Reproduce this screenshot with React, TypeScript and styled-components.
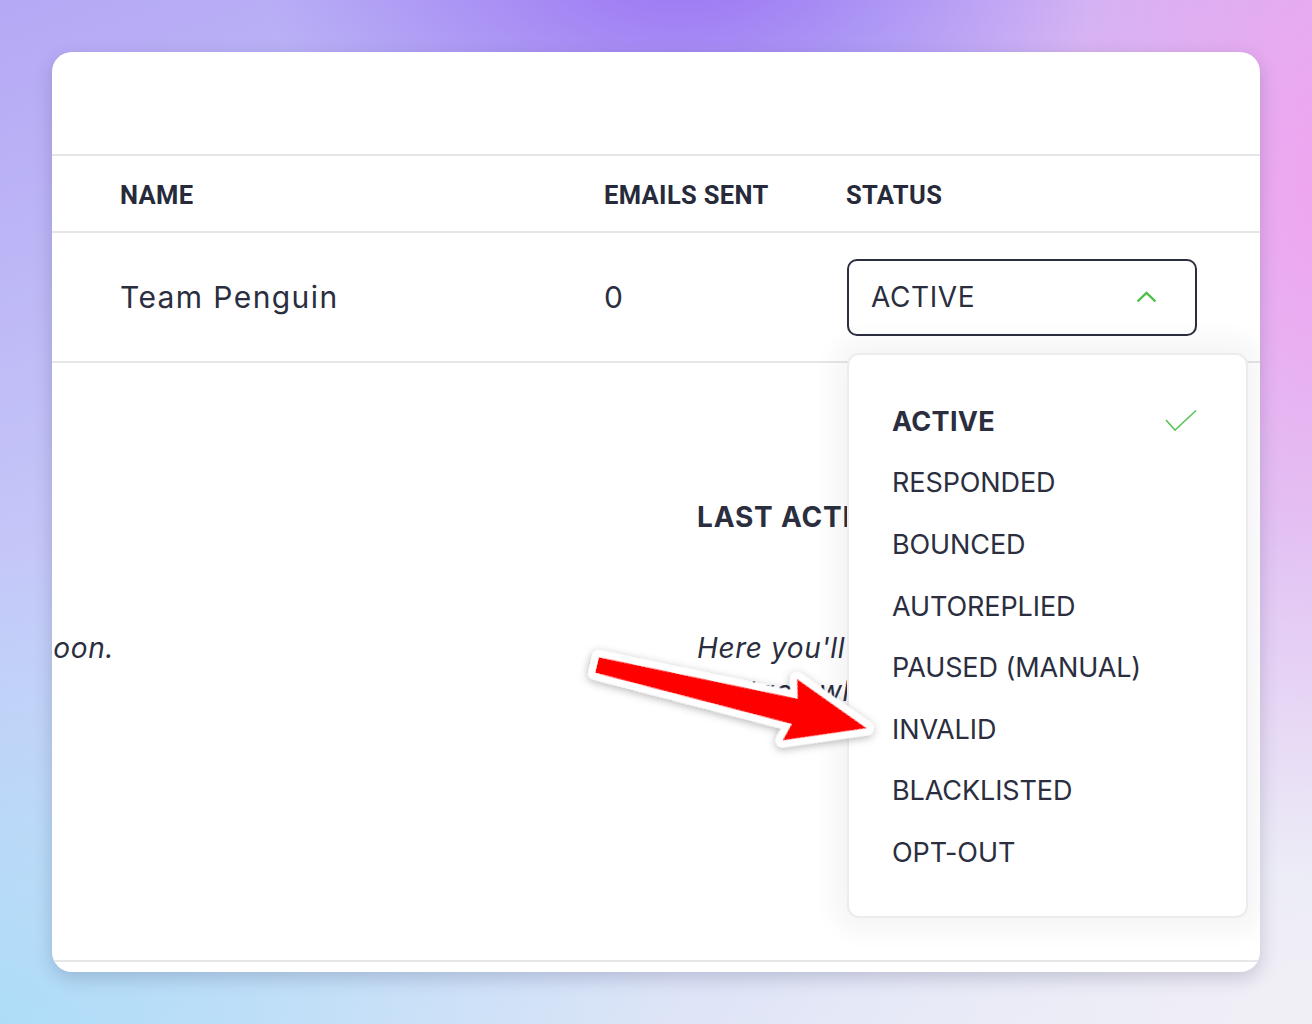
import React from 'react'
import styled, { createGlobalStyle } from 'styled-components'

const STATUSES = [
  'ACTIVE',
  'RESPONDED',
  'BOUNCED',
  'AUTOREPLIED',
  'PAUSED (MANUAL)',
  'INVALID',
  'BLACKLISTED',
  'OPT-OUT',
]

const GlobalStyle = createGlobalStyle`
  html, body {
    margin: 0;
    padding: 0;
  }
  body {
    width: 1312px;
    height: 1024px;
    overflow: hidden;
    font-family: Inter, "Noto Sans", sans-serif;
    color: #2a2e3e;
    background:
      radial-gradient(ellipse 420px 260px at 52% -4%, #9a72f3 0%, rgba(154, 114, 243, 0) 100%),
      radial-gradient(ellipse 520px 700px at 104% 18%, #f3a2ee 0%, rgba(243, 162, 238, 0) 100%),
      radial-gradient(ellipse 760px 520px at -6% 104%, #a8dcf8 0%, rgba(168, 220, 248, 0) 100%),
      radial-gradient(ellipse 600px 500px at 100% 100%, #f1eff6 0%, rgba(241, 239, 246, 0) 100%),
      linear-gradient(160deg, #b5a8f5 0%, #c6c9f8 40%, #d6e0f8 70%, #e8eaf6 100%);
  }
`

const Page = styled.div`
  box-sizing: border-box;
  width: 1312px;
  height: 1024px;
  padding: 52px;
`

const Card = styled.div`
  width: 1208px;
  height: 920px;
  background: #ffffff;
  border-radius: 20px;
  overflow: hidden;
  display: flex;
  flex-direction: column;
  box-shadow: 0 6px 18px rgba(50, 50, 90, 0.22);
`

const CardTop = styled.div`
  height: 102px;
  border-bottom: 2px solid #e6e6e8;
  flex-shrink: 0;
`

const Row = styled.div<{ $height: number }>`
  display: grid;
  grid-template-columns: 484px 242px 1fr;
  align-items: center;
  height: ${(p) => p.$height}px;
  padding-left: 68px;
  border-bottom: 2px solid #e6e6e8;
  flex-shrink: 0;
`

const HeadCell = styled.div`
  font-family: Roboto, "Liberation Sans", sans-serif;
  font-weight: 700;
  font-size: 25.5px;
  letter-spacing: 0.35px;
  padding-top: 2px;
  color: #272a3a;
`

const Cell = styled.div`
  font-size: 30px;
  letter-spacing: 1.4px;
  color: #2a2e3e;
`

const StatusCell = styled.div`
  position: relative;
  padding-left: 1px;
`

const Select = styled.div`
  box-sizing: border-box;
  width: 350px;
  height: 77px;
  border: 2px solid #2a2e3e;
  border-radius: 10px;
  padding: 0 38px 0 22px;
  display: flex;
  align-items: center;
  justify-content: space-between;
  font-size: 28px;
  letter-spacing: 0.6px;
`

const Menu = styled.div`
  position: absolute;
  z-index: 5;
  top: calc(100% + 17px);
  left: 1px;
  box-sizing: border-box;
  width: 401px;
  height: 565px;
  padding-top: 36px;
  background: #ffffff;
  border: 2px solid #ececef;
  border-radius: 12px;
  box-shadow: 0 0 26px 12px rgba(40, 40, 70, 0.05);
`

const MenuItem = styled.div<{ $selected?: boolean }>`
  height: 61.6px;
  padding: 0 49px 0 43px;
  display: flex;
  align-items: center;
  justify-content: space-between;
  font-size: 27px;
  letter-spacing: ${(p) => (p.$selected ? 0.3 : -0.1)}px;
  font-weight: ${(p) => (p.$selected ? 700 : 400)};
  color: #2a2e3e;
`

const Activity = styled.div`
  flex: 1;
  overflow: hidden;
  border-bottom: 2px solid #e6e6e8;
`

const ActivityTrack = styled.div`
  display: flex;
  margin-left: -500px;
  padding-top: 137px;
`

const ActivityColumn = styled.div<{ $width: number; $offset?: number }>`
  flex-shrink: 0;
  width: ${(p) => p.$width}px;
  margin-left: ${(p) => p.$offset || 0}px;
`

const ActivityTitle = styled.h3`
  margin: 0;
  height: 34px;
  line-height: 34px;
  font-size: 28px;
  font-weight: 700;
  letter-spacing: 0.8px;
  white-space: nowrap;
`

const ActivityText = styled.p<{ $single?: boolean }>`
  margin: 93px 0 0;
  font-size: 28px;
  line-height: 43px;
  font-style: italic;
  letter-spacing: 0.6px;
  text-align: ${(p) => (p.$single ? 'right' : 'left')};
  white-space: ${(p) => (p.$single ? 'nowrap' : 'normal')};
`

const CardFoot = styled.div`
  height: 10px;
  flex-shrink: 0;
`

const Overlay = styled.svg`
  position: fixed;
  left: 0;
  top: 0;
  z-index: 100;
  pointer-events: none;
`

const ChevronUp = () => (
  <svg width="21" height="12" viewBox="0 0 21 12">
    <polyline points="1.5,10.5 10.5,1.8 19.5,10.5" fill="none" stroke="#4cc04a" strokeWidth="2.4" />
  </svg>
)

const Check = () => (
  <svg width="32" height="24" viewBox="0 0 32 24">
    <polyline points="1,11 10,21 31,1.5" fill="none" stroke="#5cc45a" strokeWidth="1.6" />
  </svg>
)

const App: React.FC = () => {
  return (
    <React.Fragment>
      <GlobalStyle />
      <Page>
        <Card>
          <CardTop />
          <Row $height={75}>
            <HeadCell>NAME</HeadCell>
            <HeadCell>EMAILS SENT</HeadCell>
            <HeadCell>STATUS</HeadCell>
          </Row>
          <Row $height={128}>
            <Cell>Team Penguin</Cell>
            <Cell>0</Cell>
            <StatusCell>
              <Select>
                <span>ACTIVE</span>
                <ChevronUp />
              </Select>
              <Menu>
                {STATUSES.map((s, i) => (
                  <MenuItem key={s} $selected={i === 0}>
                    <span>{s}</span>
                    {i === 0 && <Check />}
                  </MenuItem>
                ))}
              </Menu>
            </StatusCell>
          </Row>
          <Activity>
            <ActivityTrack>
              <ActivityColumn $width={562}>
                <ActivityTitle>UPCOMING</ActivityTitle>
                <ActivityText $single>Scheduled emails will appear soon.</ActivityText>
              </ActivityColumn>
              <ActivityColumn $width={640} $offset={583}>
                <ActivityTitle>LAST ACTIVITY</ActivityTitle>
                <ActivityText>
                  Here you'll see the latest activity of this contact, what they've done.
                </ActivityText>
              </ActivityColumn>
            </ActivityTrack>
          </Activity>
          <CardFoot />
        </Card>
      </Page>
      <Overlay width="1312" height="1024" viewBox="0 0 1312 1024">
        <defs>
          <filter id="arrowShadow" x="-20%" y="-50%" width="140%" height="200%">
            <feDropShadow dx="0" dy="2" stdDeviation="4" floodColor="#000000" floodOpacity="0.3" />
          </filter>
        </defs>
        <g transform="translate(597 665) rotate(13.2)" filter="url(#arrowShadow)">
          <polygon
            points="0,-8 203,-13 198,-32 277,0 198,31 203,13 0,8"
            fill="#ff0000"
            stroke="#ffffff"
            strokeWidth="14"
            strokeLinejoin="round"
            paintOrder="stroke"
          />
        </g>
      </Overlay>
    </React.Fragment>
  )
}

export default App
